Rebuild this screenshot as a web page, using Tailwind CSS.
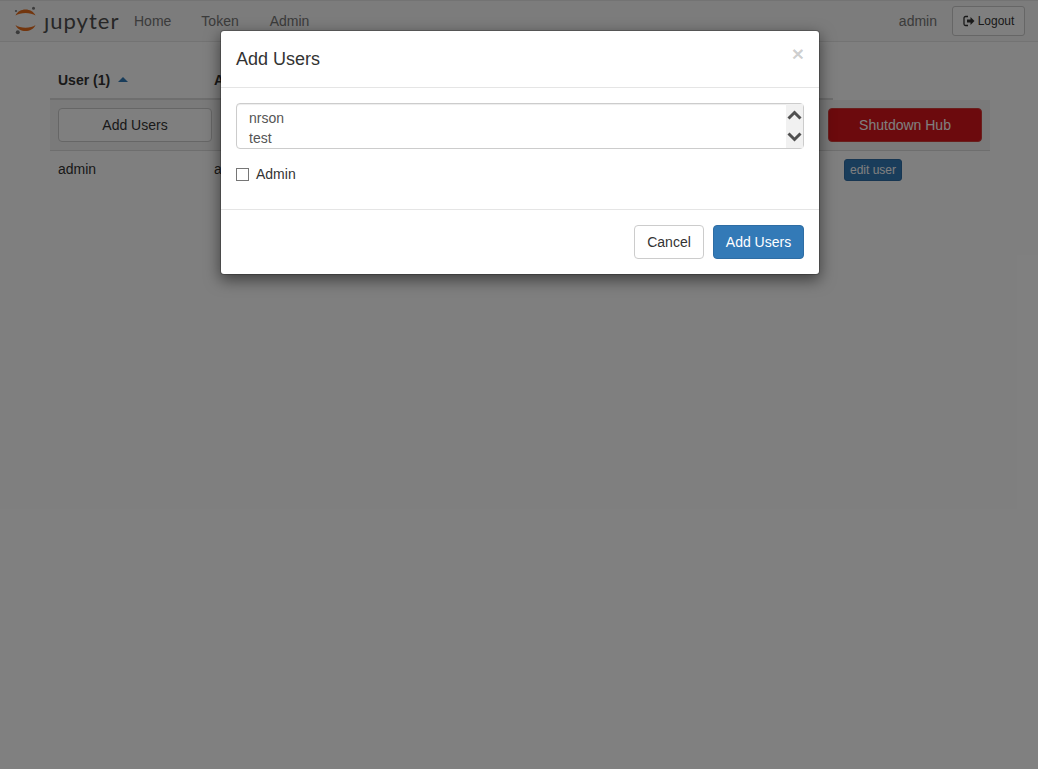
<!DOCTYPE html>
<html lang="en">
<head>
  <meta charset="UTF-8" />
  <title>JupyterHub Admin</title>
  <script src="https://cdn.jsdelivr.net/npm/@tailwindcss/browser@4"></script>
</head>
<body class="relative h-[769px] overflow-hidden bg-white font-['Liberation_Sans',Arial,sans-serif] text-sm text-[#333]">

  <!-- Navbar -->
  <nav class="flex h-[42px] items-center border-y border-[#e7e7e7] bg-[#f8f8f8] pl-[14px] pr-[13px]">
    <svg class="h-[36px] w-[24px]" viewBox="0 0 24 36">
      <path d="M1.5 12.5C5 4.5 18 4.5 21.5 12.5 17 9 6 9 1.5 12.5Z" fill="#e66c1c" />
      <path d="M1.5 22C6 25.5 17 25.5 21.5 22 18 30 5 30 1.5 22Z" fill="#e66c1c" />
      <circle cx="19.5" cy="5.3" r="1.5" fill="#777" />
      <circle cx="2" cy="8" r="1.1" fill="#777" />
      <circle cx="3.8" cy="29.3" r="2" fill="#777" />
    </svg>
    <span class="ml-[6px] w-[75px] whitespace-nowrap font-['Lato',sans-serif] text-[22px] leading-none tracking-[1px] text-[#4e4e4e]">ȷupyter</span>
    <a class="ml-[15px] text-[#777]">Home</a>
    <a class="ml-[30px] text-[#777]">Token</a>
    <a class="ml-[31px] text-[#777]">Admin</a>
    <span class="ml-auto text-[#777]">admin</span>
    <button class="ml-[15px] flex h-[30px] w-[73px] items-center justify-center gap-[3px] rounded-[3px] border border-[#ccc] bg-white text-xs text-[#333]">
      <svg class="h-[12px] w-[12px]" viewBox="0 0 12 12">
        <path d="M5 1.5H2.5A1.5 1.5 0 0 0 1 3v6a1.5 1.5 0 0 0 1.5 1.5H5" fill="none" stroke="#333" stroke-width="1.3" />
        <path d="M4 4.5h3.5V2l4 4-4 4V7.5H4z" fill="#333" />
      </svg>
      Logout
    </button>
  </nav>

  <!-- Users table -->
  <main class="pl-[50px] pr-[48px] pt-[21px]">
    <div class="flex h-[37px] w-[783px] items-center border-b-2 border-[#ddd] px-2 pb-[2px] font-bold">
      <span class="w-[156px]">User (1) <svg class="mb-[3px] ml-[4px] inline h-[5px] w-[10px]" viewBox="0 0 10 5"><path d="M0 5 5 0l5 5z" fill="#337ab7" /></svg></span>
      <span>Admin</span>
    </div>
    <div class="flex h-[51px] items-center justify-between border-b border-[#ddd] bg-[#f5f5f5] px-2">
      <button class="h-[34px] w-[154px] rounded-[4px] border border-[#ccc] bg-white">Add Users</button>
      <button class="h-[34px] w-[154px] rounded-[4px] border border-[#d43f3a] bg-[#d9141a] text-white">Shutdown Hub</button>
    </div>
    <div class="flex h-[35px] items-center px-2">
      <span class="w-[156px]">admin</span>
      <span>admin</span>
      <button class="ml-auto mr-[80px] mt-[2px] h-[22px] w-[58px] shrink-0 rounded-[3px] border border-[#2e6da4] bg-[#337ab7] text-xs text-white">edit user</button>
    </div>
  </main>

  <!-- Backdrop -->
  <div class="absolute inset-0 bg-black/50"></div>

  <!-- Add Users modal -->
  <div class="absolute left-[220px] top-[30px] w-[600px] rounded-[4px] border border-black/20 bg-white bg-clip-padding shadow-[0_5px_15px_rgba(0,0,0,0.5)]">
    <div class="flex h-[57px] items-center justify-between border-b border-[#e5e5e5] px-[15px]">
      <h4 class="text-lg leading-none text-[#333]">Add Users</h4>
      <span class="-mt-[12px] text-[21px] font-bold leading-none text-black/20">×</span>
    </div>
    <div class="px-[15px] pb-[25px] pt-[15px]">
      <div class="flex h-[46px] rounded-[4px] border border-[#ccc] shadow-[inset_0_1px_1px_rgba(0,0,0,0.075)]">
        <div class="flex-1 px-3 py-1 leading-5 text-[#555]">nrson<br />test</div>
        <div class="flex w-[17px] flex-col justify-between bg-[#f1f1f1] pb-[4px] pt-[4px]">
          <svg class="h-[14px] w-[17px]" viewBox="0 0 17 14"><path d="M2.5 10.5 8.5 4.5l6 6" fill="none" stroke="#505050" stroke-width="3" /></svg>
          <svg class="h-[14px] w-[17px]" viewBox="0 0 17 14"><path d="M2.5 3.5l6 6 6-6" fill="none" stroke="#505050" stroke-width="3" /></svg>
        </div>
      </div>
      <label class="mt-[15px] flex h-[20px] items-center gap-[7px] text-[#333]">
        <span class="h-[13px] w-[13px] border border-[#767676] bg-white"></span>
        Admin
      </label>
    </div>
    <div class="flex h-[65px] items-center justify-end gap-[9px] border-t border-[#e5e5e5] px-[15px]">
      <button class="h-[34px] w-[70px] rounded-[4px] border border-[#ccc] bg-white text-[#333]">Cancel</button>
      <button class="h-[34px] w-[91px] rounded-[4px] border border-[#2e6da4] bg-[#337ab7] text-white">Add Users</button>
    </div>
  </div>
</body>
</html>
